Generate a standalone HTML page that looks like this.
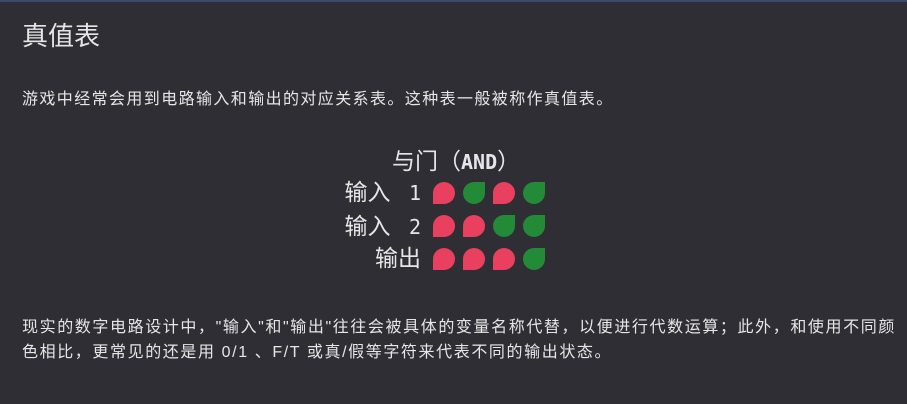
<!DOCTYPE html>
<html><head><meta charset="utf-8"><style>
html,body{margin:0;padding:0;}
body{width:907px;height:404px;background:#2f2e35;border-top:2px solid #3d4a6e;box-sizing:border-box;color:#e6e6e6;font-family:"Liberation Sans","Noto Sans CJK SC",sans-serif;position:relative;overflow:hidden;}
.t{position:absolute;left:22px;top:14px;font-size:26px;}
.p{position:absolute;left:22px;font-size:16px;white-space:nowrap;}
.lbl{position:absolute;right:486px;font-size:23px;white-space:nowrap;}
.h{position:absolute;left:392px;top:140px;font-size:23px;white-space:nowrap;}
.mono{font-family:"DejaVu Sans Mono","Liberation Mono",monospace;font-size:20px;}
.cjk{font-family:"Noto Sans CJK SC",sans-serif;}
.d{position:absolute;width:22px;height:22px;}
.r{background:#e8405e;border-radius:50% 50% 50% 0;}
.g{background:#238a37;border-radius:50% 0 50% 50%;}
</style></head><body>
<div class="t">真值表</div>
<div class="p" style="top:83px;letter-spacing:1.4px">游戏中经常会用到电路输入和输出的对应关系表。这种表一般被称作真值表。</div>
<div class="h">与门<span class="cjk">（</span><span class="mono" style="font-weight:bold">AND</span><span class="cjk">）</span></div>
<div class="lbl" style="top:171px">输入 <span class="mono">&nbsp;1</span></div>
<div class="lbl" style="top:205px">输入 <span class="mono">&nbsp;2</span></div>
<div class="lbl" style="top:237px">输出</div>
<div class="d r" style="left:433px;top:180px"></div><div class="d g" style="left:463px;top:180px"></div><div class="d r" style="left:493px;top:180px"></div><div class="d g" style="left:523px;top:180px"></div>
<div class="d r" style="left:433px;top:213px"></div><div class="d r" style="left:463px;top:213px"></div><div class="d g" style="left:493px;top:213px"></div><div class="d g" style="left:523px;top:213px"></div>
<div class="d r" style="left:433px;top:246px"></div><div class="d r" style="left:463px;top:246px"></div><div class="d r" style="left:493px;top:246px"></div><div class="d g" style="left:523px;top:246px"></div>
<div class="p" style="top:311px;letter-spacing:1.6px">现实的数字电路设计中，"输入"和"输出"往往会被具体的变量名称代替，以便进行代数运算；此外，和使用不同颜</div>
<div class="p" style="top:336px;letter-spacing:1.6px">色相比，更常见的还是用 0/1 、F/T 或真/假等字符来代表不同的输出状态。</div>
</body></html>
